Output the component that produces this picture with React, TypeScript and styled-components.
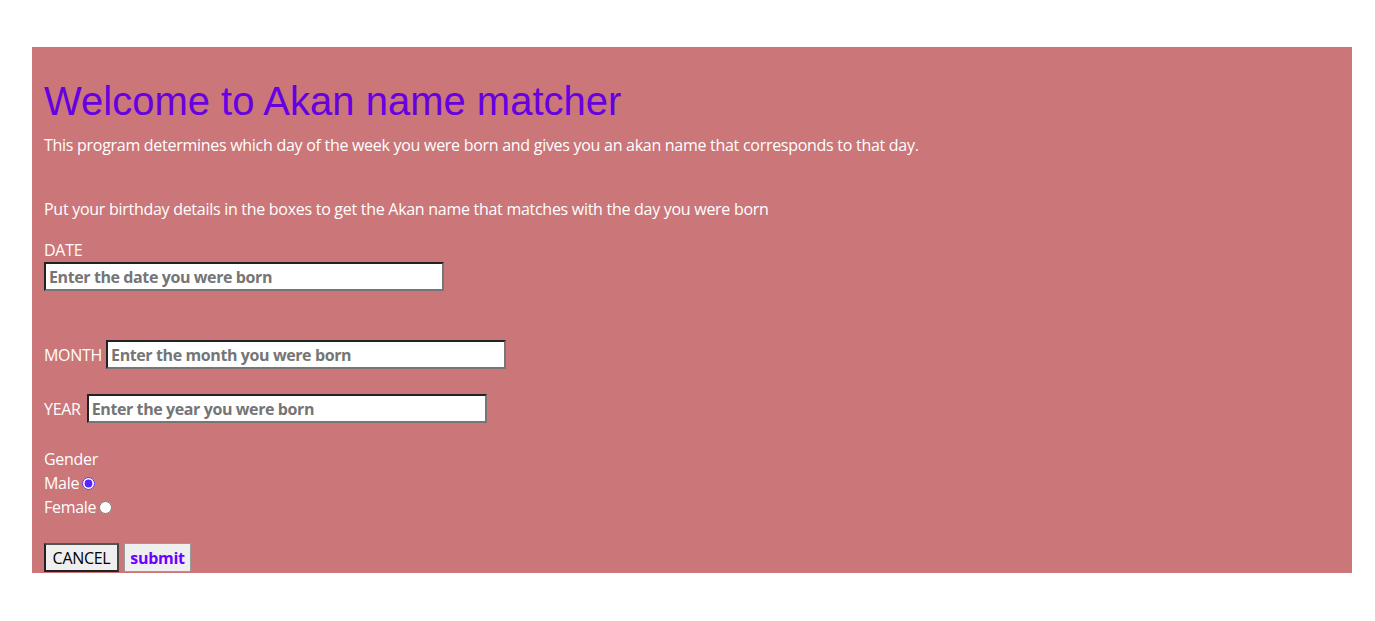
import React from "react";
import styled, { createGlobalStyle } from "styled-components";

const GlobalStyle = createGlobalStyle`
  html, body { margin: 0; padding: 0; background: #ffffff; }
  body { font-family: "Open Sans", "DejaVu Sans", sans-serif; }
`;

const Page = styled.div`
  padding: 47px 23px 0 32px;
`;

const Panel = styled.main`
  background: #cb7679;
  padding: 31px 12px 1px 12px;
  color: #ffffff;
  font-family: "Open Sans", sans-serif;
  font-size: 16px;
  letter-spacing: -0.28px;
`;

const Title = styled.h1`
  margin: 0;
  font-family: "Liberation Sans", Arial, sans-serif;
  font-weight: 400;
  font-size: 40px;
  line-height: 46px;
  letter-spacing: 0;
  color: #6600e0;
`;

const Text = styled.p<{ $top: number }>`
  margin: ${(p) => p.$top}px 0 0 0;
  line-height: 24px;
`;

const Form = styled.form`
  display: flex;
  flex-direction: column;
  align-items: flex-start;
`;

const Label = styled.label<{ $top: number }>`
  display: block;
  margin-top: ${(p) => p.$top}px;
  line-height: 24px;
`;

const Row = styled.div<{ $top: number; $gap: number }>`
  display: flex;
  align-items: center;
  gap: ${(p) => p.$gap}px;
  margin-top: ${(p) => p.$top}px;
  line-height: 24px;
`;

const Input = styled.input`
  box-sizing: border-box;
  width: 400px;
  height: 29px;
  margin: 0;
  padding: 1px 3px;
  background: #ffffff;
  border: 2px solid #767676;
  border-top-color: #222;
  border-left-color: #222;
  font-family: "Open Sans", sans-serif;
  font-weight: 700;
  font-size: 16px;
  letter-spacing: -0.4px;
  color: #333;
  &::placeholder { color: #757575; opacity: 1; }
`;

const RadioRow = styled.label`
  display: flex;
  align-items: center;
  gap: 3px;
  line-height: 24px;
`;

const Radio = styled.input`
  margin: 0;
  width: 13px;
  height: 13px;
  accent-color: #5a22ff;
`;

const Buttons = styled.div`
  display: flex;
  gap: 5px;
  margin-top: 24px;
`;

const Button = styled.button<{ $primary?: boolean }>`
  box-sizing: border-box;
  width: ${(p) => (p.$primary ? "67px" : "75px")};
  height: 29px;
  padding: 0;
  background: #efefef;
  font-family: "Open Sans", sans-serif;
  font-size: 16px;
  letter-spacing: -0.3px;
  font-weight: ${(p) => (p.$primary ? 700 : 400)};
  color: ${(p) => (p.$primary ? "#6e00ff" : "#000")};
  border: ${(p) => (p.$primary ? "1px solid #9a9a9a" : "2px solid #222")};
  ${(p) => (p.$primary ? "" : "border-top-color: #555; border-right-color: #444;")}
  border-radius: 0;
`;

export default function App() {
  return (
    <>
      <GlobalStyle />
      <Page>
        <Panel>
          <Title>Welcome to Akan name matcher</Title>
          <Text $top={9}>
            This program determines which day of the week you were born and gives you an akan name that corresponds to that day.
          </Text>
          <Text $top={40}>
            Put your birthday details in the boxes to get the Akan name that matches with the day you were born
          </Text>
          <Form onSubmit={(e) => e.preventDefault()}>
            <Label $top={17} htmlFor="date">DATE</Label>
            <Input id="date" placeholder="Enter the date you were born" />
            <Row $top={49} $gap={4}>
              <span>MONTH</span>
              <Input placeholder="Enter the month you were born" />
            </Row>
            <Row $top={25} $gap={6}>
              <span>YEAR</span>
              <Input placeholder="Enter the year you were born" />
            </Row>
            <Label $top={24}>Gender</Label>
            <RadioRow>
              Male <Radio type="radio" name="gender" defaultChecked />
            </RadioRow>
            <RadioRow>
              Female <Radio type="radio" name="gender" />
            </RadioRow>
            <Buttons>
              <Button type="button">CANCEL</Button>
              <Button type="submit" $primary>submit</Button>
            </Buttons>
          </Form>
        </Panel>
      </Page>
    </>
  );
}
